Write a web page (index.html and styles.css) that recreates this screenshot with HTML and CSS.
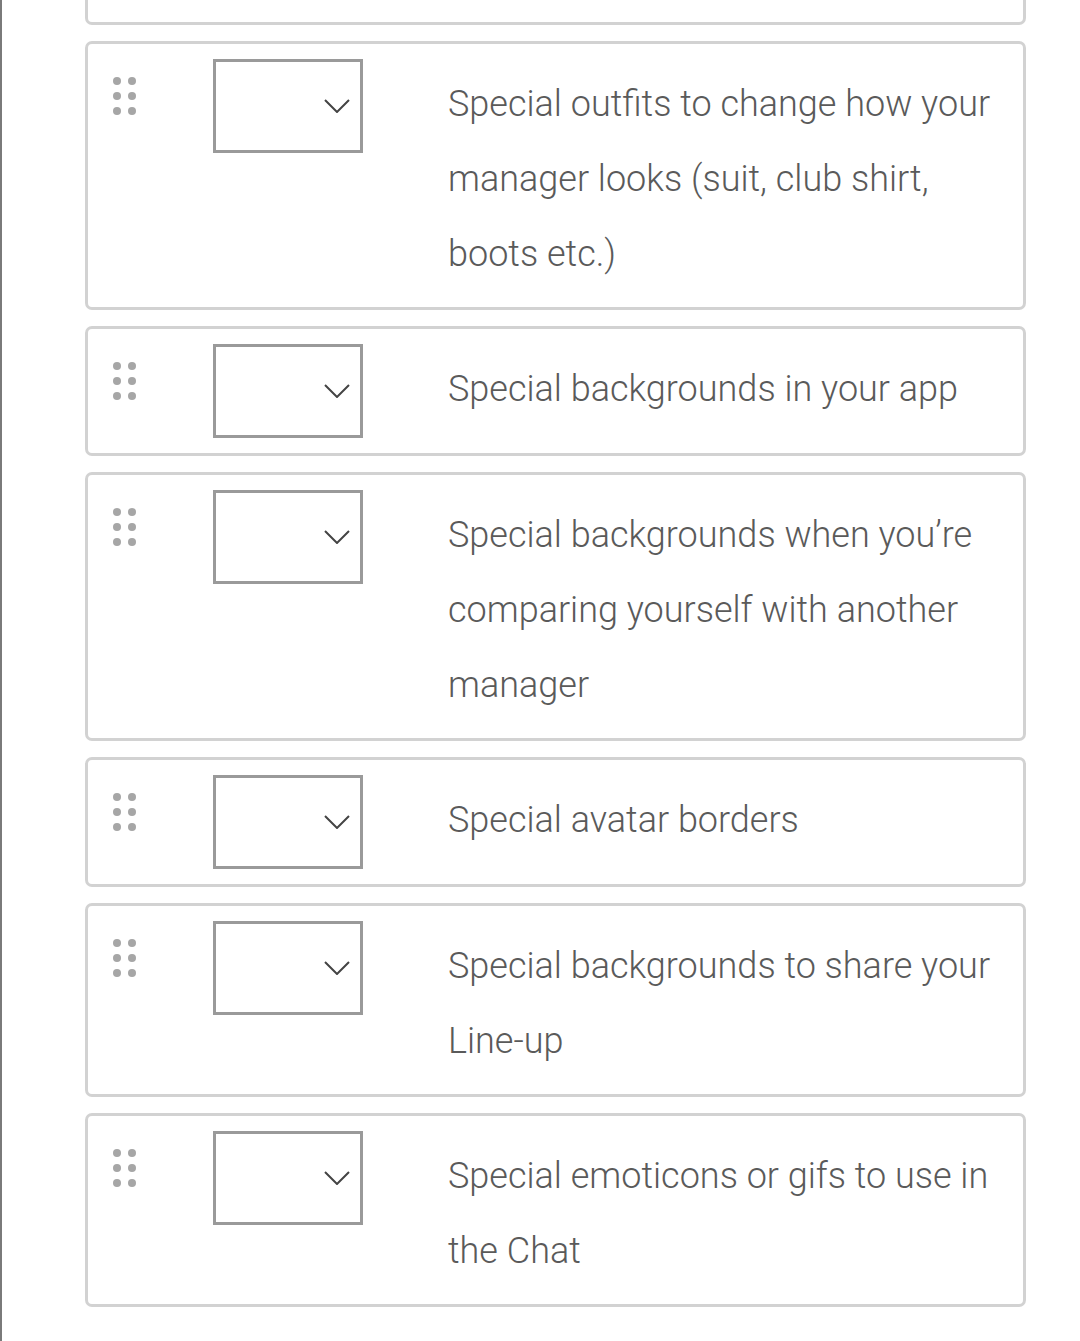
FILE: index.html
```html
<!DOCTYPE html>
<html lang="en">
<head>
<meta charset="utf-8">
<title>Ranking</title>
<link rel="stylesheet" href="styles.css">
</head>
<body>
<div class="page">
  <div class="list">
    <div class="card card--cut"></div>

    <div class="card">
      <div class="handle"><span></span><span></span><span></span><span></span><span></span><span></span></div>
      <div class="select"><svg class="chev" viewBox="0 0 26 14" width="26" height="14"><path d="M1 1 L13 13 L25 1" fill="none" stroke="#444" stroke-width="2"/></svg></div>
      <p class="label">Special outfits to change how your manager looks (suit, club shirt, boots etc.)</p>
    </div>

    <div class="card">
      <div class="handle"><span></span><span></span><span></span><span></span><span></span><span></span></div>
      <div class="select"><svg class="chev" viewBox="0 0 26 14" width="26" height="14"><path d="M1 1 L13 13 L25 1" fill="none" stroke="#444" stroke-width="2"/></svg></div>
      <p class="label">Special backgrounds in your app</p>
    </div>

    <div class="card">
      <div class="handle"><span></span><span></span><span></span><span></span><span></span><span></span></div>
      <div class="select"><svg class="chev" viewBox="0 0 26 14" width="26" height="14"><path d="M1 1 L13 13 L25 1" fill="none" stroke="#444" stroke-width="2"/></svg></div>
      <p class="label">Special backgrounds when you’re comparing yourself with another manager</p>
    </div>

    <div class="card">
      <div class="handle"><span></span><span></span><span></span><span></span><span></span><span></span></div>
      <div class="select"><svg class="chev" viewBox="0 0 26 14" width="26" height="14"><path d="M1 1 L13 13 L25 1" fill="none" stroke="#444" stroke-width="2"/></svg></div>
      <p class="label">Special avatar borders</p>
    </div>

    <div class="card">
      <div class="handle"><span></span><span></span><span></span><span></span><span></span><span></span></div>
      <div class="select"><svg class="chev" viewBox="0 0 26 14" width="26" height="14"><path d="M1 1 L13 13 L25 1" fill="none" stroke="#444" stroke-width="2"/></svg></div>
      <p class="label">Special backgrounds to share your Line-up</p>
    </div>

    <div class="card">
      <div class="handle"><span></span><span></span><span></span><span></span><span></span><span></span></div>
      <div class="select"><svg class="chev" viewBox="0 0 26 14" width="26" height="14"><path d="M1 1 L13 13 L25 1" fill="none" stroke="#444" stroke-width="2"/></svg></div>
      <p class="label">Special emoticons or gifs to use in the Chat</p>
    </div>
  </div>
</div>
</body>
</html>
```

FILE: styles.css
```css
html, body {
  margin: 0;
  padding: 0;
  background: #fff;
}

body {
  font-family: Roboto, "Liberation Sans", sans-serif;
}

.page {
  min-height: 1341px;
  border-left: 2px solid #7a7a7a;
  box-sizing: border-box;
}

.list {
  display: flex;
  flex-direction: column;
  gap: 16px;
  padding-left: 83px;
  width: 941px;
}

.card {
  display: flex;
  align-items: flex-start;
  border: 3px solid #d2d2d2;
  border-radius: 7px;
  padding: 15px 15px 15px 0;
  background: #fff;
}

.card--cut {
  border-top: none;
  border-radius: 0 0 7px 7px;
  padding: 0;
  height: 22px;
}

.handle {
  display: grid;
  grid-template-columns: 8px 8px;
  grid-auto-rows: 8px;
  column-gap: 7px;
  row-gap: 7px;
  margin: 18px 0 0 25px;
  flex: none;
}

.handle span {
  width: 8px;
  height: 8px;
  border-radius: 50%;
  background: #a6a6a6;
}

.select {
  flex: none;
  box-sizing: border-box;
  width: 150px;
  height: 94px;
  margin-left: 77px;
  border: 3px solid #9a9a9a;
  display: flex;
  align-items: center;
  justify-content: flex-end;
  padding-right: 10px;
}

.chev {
  display: block;
}

.label {
  flex: 1;
  margin: 8px 0 0 85px;
  font-size: 36px;
  font-weight: 300;
  line-height: 75px;
  color: #5a5a5a;
}
```
